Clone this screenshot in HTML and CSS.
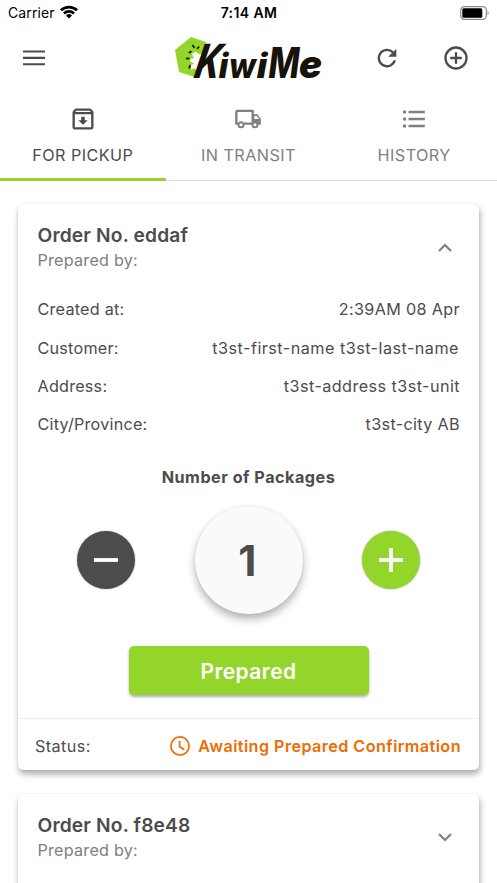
FILE: index.html
```html
<!DOCTYPE html>
<html lang="en">
<head>
<meta charset="utf-8">
<title>KiwiMe</title>
<link rel="stylesheet" href="styles.css">
</head>
<body>
<div class="statusbar">
  <div class="carrier"><span>Carrier</span>
    <svg width="18" height="14" viewBox="0 0 18 14"><path d="M0 4.3A13 13 0 0 1 18 4.3L16.1 6.3A10.2 10.2 0 0 0 1.9 6.3ZM3 7.4A8.6 8.6 0 0 1 15 7.4L13.1 9.4A5.8 5.8 0 0 0 4.9 9.4ZM6 10.5A4.3 4.3 0 0 1 12 10.5L9 13.6Z"/></svg>
  </div>
  <div class="clock">7:14 AM</div>
  <div class="battery"><svg width="30" height="14" viewBox="0 0 30 14"><rect x=".7" y=".7" width="25.6" height="12.6" rx="3.6" fill="none" stroke="#8c8c8c" stroke-width="1.2"/><rect x="2.3" y="2.3" width="20" height="9.4" rx="1.5"/><path d="M27.6 4.8q2 2.2 0 4.4z" fill="#777"/></svg></div>
</div>
<header class="header">
  <svg class="menu" width="22" height="16" viewBox="0 0 22 16"><path d="M0 1.5H22M0 7.9H22M0 14.3H22" stroke="#4c4c4c" stroke-width="2.1"/></svg>
  <svg class="logo" width="152" height="46" viewBox="0 0 152 46">
    <path d="M0 15 16 2 31 7 20 42 4 37Z" fill="#93d52a"/>
    <path d="m17 19 4-2.500 3 3 3-1-5 17-2-2-4 1v-4l3-2-4-2 1-3 3 0z" fill="#fff"/>
    <path d="m17.500 10 2 3M24.200 11.500l-2.200 2.300M13.800 18l2.600-1.800M11 23.300l3.500.3M15 30l-.8 3.500" stroke="#17120a" stroke-width="1.700"/>
    <g class="wordmark">
      <g transform="translate(18 42.500) skewX(-12)"><text class="k" x="0" y="0" textLength="25" lengthAdjust="spacingAndGlyphs">K</text></g>
      <text class="s" x="43.500" y="42.500" textLength="10" lengthAdjust="spacingAndGlyphs">i</text>
      <text class="s" x="54" y="42.500" textLength="27" lengthAdjust="spacingAndGlyphs">w</text>
      <text class="s" x="81.500" y="42.500" textLength="11" lengthAdjust="spacingAndGlyphs">i</text>
      <text class="m" x="93.500" y="42.500" textLength="31" lengthAdjust="spacingAndGlyphs">M</text>
      <text class="e" x="124" y="42.500" textLength="23" lengthAdjust="spacingAndGlyphs">e</text>
    </g>
  </svg>
  <div class="actions">
    <svg width="28" height="28" viewBox="0 0 24 24"><path d="M17.65 6.35A8 8 0 1 0 19.73 14h-2.08A6 6 0 1 1 12 6c1.66 0 3.14.69 4.22 1.78L13 11h7V4z"/></svg>
    <svg width="28" height="28" viewBox="0 0 24 24"><path d="M13 7h-2v4H7v2h4v4h2v-4h4v-2h-4zm-1-5a10 10 0 1 0 0 20 10 10 0 0 0 0-20m0 18a8 8 0 1 1 0-16 8 8 0 0 1 0 16"/></svg>
  </div>
</header>
<nav class="tabs">
  <div class="tab active">
    <svg width="28" height="28" viewBox="0 0 24 24"><path fill-rule="evenodd" d="m20.54 5.23-1.39-1.68C18.88 3.21 18.47 3 18 3H6c-.47 0-.88.21-1.16.55L3.46 5.23C3.17 5.57 3 6.02 3 6.5V19a2 2 0 0 0 2 2h14a2 2 0 0 0 2-2V6.5c0-.48-.17-.93-.46-1.27M6.24 5h11.52l.83 1H5.42zM5 19V8h14v11zm8.500-9h-3v3H8l4 4 4-4h-2.500z"/></svg>
    <span>FOR PICKUP</span>
  </div>
  <div class="tab">
    <svg width="28" height="28" viewBox="0 0 24 24"><path fill-rule="evenodd" d="M17 8V4H3a2 2 0 0 0-2 2v11h2a3 3 0 0 0 6 0h6a3 3 0 0 0 6 0h2v-5l-3-4zm.5 1.500h2L21.470 12H17.500zM6 18.300a1.300 1.300 0 1 1 0-2.600 1.300 1.300 0 0 1 0 2.600m2.220-3.300a3 3 0 0 0-4.440 0H3V6h12v9zM18 18.300a1.300 1.300 0 1 1 0-2.600 1.300 1.300 0 0 1 0 2.600"/></svg>
    <span>IN TRANSIT</span>
  </div>
  <div class="tab">
    <svg width="28" height="28" viewBox="0 0 24 24"><path d="M7.300 5h14v2h-14zm0 6h14v2h-14zm0 6h14v2h-14z"/><circle cx="3.900" cy="6" r="1.500"/><circle cx="3.900" cy="12" r="1.500"/><circle cx="3.900" cy="18" r="1.500"/></svg>
    <span>HISTORY</span>
  </div>
</nav>
<main class="orders">
  <section class="card">
    <div class="cardhead">
      <div><h2>Order No. eddaf</h2><p>Prepared by:</p></div>
      <svg class="chev" width="14" height="9" viewBox="0 0 14 9"><path d="m1 8 6-6 6 6"/></svg>
    </div>
    <dl class="details">
      <div><dt>Created at:</dt><dd>2:39AM 08 Apr</dd></div>
      <div><dt>Customer:</dt><dd class="name">t3st-first-name t3st-last-name</dd></div>
      <div><dt>Address:</dt><dd class="address">t3st-address t3st-unit</dd></div>
      <div><dt>City/Province:</dt><dd>t3st-city AB</dd></div>
    </dl>
    <h3>Number of Packages</h3>
    <div class="stepper">
      <button class="round minus"><svg width="26" height="26" viewBox="0 0 26 26"><path d="M1 13H25"/></svg></button>
      <div class="count">1</div>
      <button class="round plus"><svg width="26" height="26" viewBox="0 0 26 26"><path d="M1 13H25M13 1V25"/></svg></button>
    </div>
    <button class="prepared">Prepared</button>
    <div class="status">
      <span>Status:</span>
      <div class="state"><svg width="20" height="20" viewBox="0 0 20 20"><circle cx="10" cy="10" r="9.100"/><path d="M9.600 5v5.500l4.700 3.200"/></svg><span>Awaiting Prepared Confirmation</span></div>
    </div>
  </section>
  <section class="card next">
    <div class="cardhead">
      <div><h2>Order No. f8e48</h2><p>Prepared by:</p></div>
      <svg class="chev" width="14" height="9" viewBox="0 0 14 9"><path d="m1 1 6 6 6-6"/></svg>
    </div>
  </section>
</main>
</body>
</html>
```
FILE: styles.css
```css
* { box-sizing: border-box; }
body { margin: 0; height: 883px; overflow: hidden; background: #fff; color: #4c4c4c; font: 16.2px/20px Inter, "Liberation Sans", sans-serif; letter-spacing: .22px; }
svg { display: block; flex: none; }
h2, h3, p, dl, dd { margin: 0; }
button { border: 0; padding: 0; font: inherit; }
.statusbar { height: 26px; display: grid; grid-template-columns: 1fr 1fr 1fr; align-items: center; padding: 0 7px 0 8px; color: #000; font-size: 14px; letter-spacing: .1px; }
.carrier { display: flex; align-items: center; gap: 5px; }
.carrier svg { margin-top: -2px; }
.clock { text-align: center; font-weight: 600; letter-spacing: .4px; }
.battery { justify-self: end; }
.battery svg { margin-top: -1px; }
.header { height: 64px; display: grid; grid-template-columns: 152px 1fr 123px; align-items: center; padding: 0 27px 0 23px; }
.logo { margin-top: -1px; overflow: visible; }
.wordmark { font-family: Inter, sans-serif; font-style: italic; font-weight: 900; letter-spacing: 0; fill: #17120a; }
.k { font-size: 47px; font-weight: 800; }
.s { font-size: 34px; font-weight: 800; }
.m { font-size: 42px; font-weight: 800; }
.e { font-size: 38px; }
.actions { display: flex; justify-content: space-between; padding-left: 26px; fill: #4c4c4c; }
.tabs { height: 91px; display: grid; grid-template-columns: repeat(3, 1fr); border-bottom: 1px solid #dedede; }
.tab { display: flex; flex-direction: column; align-items: center; gap: 12px; padding-top: 14.500px; height: 91px; color: #808080; fill: #808080; letter-spacing: .45px; }
.active { color: #4c4c4c; fill: #4c4c4c; border-bottom: 3px solid #93d52a; }
.orders { padding: 23px 18px 0; display: flex; flex-direction: column; gap: 24px; }
.card { flex: none; border-radius: 5px; background: #fff; box-shadow: 1px 4px 6px rgba(0,0,0,.34), 0 0 1px rgba(0,0,0,.12); }
.next { height: 120px; }
.cardhead { height: 86px; display: flex; align-items: center; justify-content: space-between; padding: 1px 27px 0 19.500px; }
.cardhead > div { padding-top: 1px; }
.cardhead h2 { font-size: 19.200px; line-height: 25px; font-weight: 600; letter-spacing: .15px; }
.cardhead p { line-height: 25px; color: #808080; }
.details { padding: 0 19px 0 19.500px; }
.details div { height: 38.400px; display: flex; align-items: center; justify-content: space-between; }
.details dd { letter-spacing: .33px; }
.details .name { letter-spacing: .47px; padding-right: 1px; }
.details .address { letter-spacing: .43px; }
.chev { fill: none; stroke: #808080; stroke-width: 2.200; }
h3 { margin-top: 23px; text-align: center; font-size: 16.200px; line-height: 20px; font-weight: 650; letter-spacing: .5px; }
.stepper { margin-top: 19px; height: 108px; display: flex; align-items: center; justify-content: space-between; padding: 0 59px; }
.round { width: 58px; height: 58px; border-radius: 50%; display: flex; align-items: center; justify-content: center; box-shadow: 0 0 2px rgba(0,0,0,.35); }
.round path { stroke: #fff; stroke-width: 3.800; }
.minus { background: #4c4c4c; }
.plus { background: #93d52a; }
.count { width: 108px; height: 108px; border-radius: 50%; background: #fafafa; text-align: center; font-size: 42px; line-height: 109px; font-weight: 700; text-indent: -2px; box-shadow: 0 5px 8px rgba(0,0,0,.3), 0 0 2px rgba(0,0,0,.08); }
.prepared { display: block; width: 240px; height: 49px; margin: 32px auto 23px; padding-top: 3px; border-radius: 5px; background: #93d52a; color: #fff; font-size: 21px; font-weight: 600; letter-spacing: .45px; box-shadow: 0 2px 3px rgba(0,0,0,.32); }
.status { height: 52px; border-top: 1px solid #ededed; display: flex; align-items: center; justify-content: space-between; padding: 3px 18px 0 17px; }
.status > span { letter-spacing: .4px; }
.state { display: flex; align-items: center; gap: 8px; color: #ee6c00; font-weight: 600; letter-spacing: .43px; }
.state svg { fill: none; stroke: #ee6c00; stroke-width: 1.700; }
```
